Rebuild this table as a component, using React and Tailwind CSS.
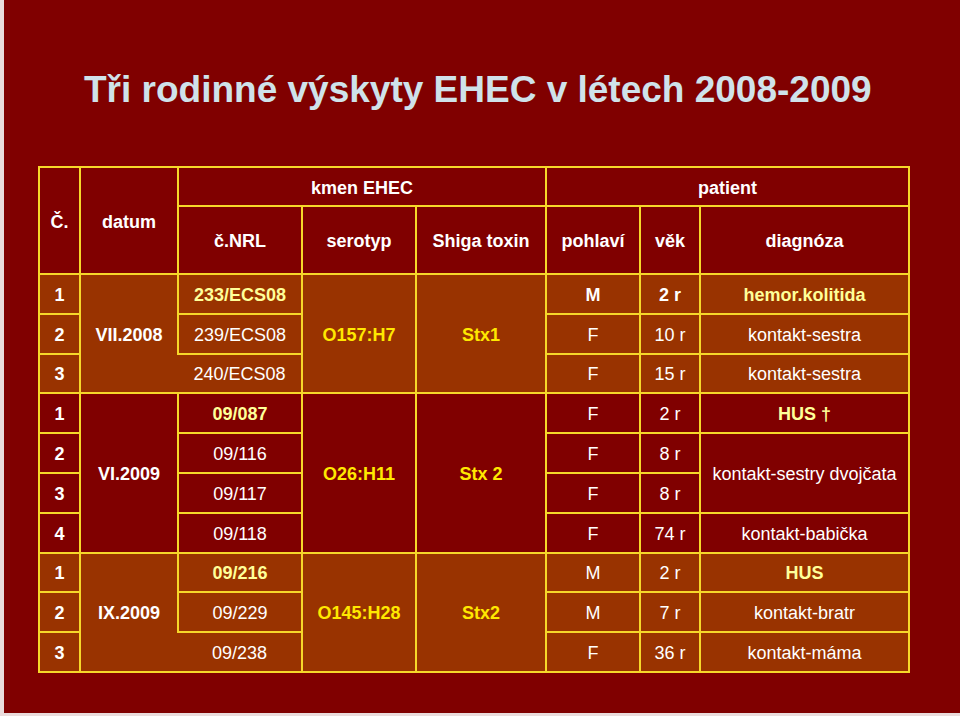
import React from "react";

const bd = "border-2 border-[#f6d72a] px-0 pt-[3px] pb-0 text-center align-middle";
const LY = "text-[#ffff99]";
const Y = "text-[#ffe800]";

function C({ children, className = "", rowSpan, colSpan }) {
  return (
    <td rowSpan={rowSpan} colSpan={colSpan} className={`${bd} ${className}`}>
      {children}
    </td>
  );
}

export default function App() {
  return (
    <div className="w-[960px] h-[716px] bg-[#eadcdc] pl-[4px] font-['Liberation_Sans',Arial,sans-serif]">
      <div className="w-[956px] h-[713px] bg-[#800000] pt-[69px] pl-[34px]">
        <h1 className="ml-[46px] text-[37px] leading-[42px] font-bold text-[#cfe2ea] whitespace-nowrap">
          Tři rodinné výskyty EHEC v létech 2008-2009
        </h1>
        <table className="mt-[55px] border-collapse table-fixed w-[870px] text-[18px] leading-[21px]">
          <colgroup>
            <col className="w-[41px]" />
            <col className="w-[98px]" />
            <col className="w-[124px]" />
            <col className="w-[114px]" />
            <col className="w-[130px]" />
            <col className="w-[94px]" />
            <col className="w-[60px]" />
            <col className="w-[209px]" />
          </colgroup>
          <tbody>
            <tr className="h-[39px] bg-[#800000] font-bold text-white">
              <C rowSpan={2}>Č.</C>
              <C rowSpan={2}>datum</C>
              <C colSpan={3}>kmen EHEC</C>
              <C colSpan={3}>patient</C>
            </tr>
            <tr className="h-[68px] bg-[#800000] font-bold text-white">
              <C>č.NRL</C>
              <C>serotyp</C>
              <C>Shiga toxin</C>
              <C>pohlaví</C>
              <C>věk</C>
              <C>diagnóza</C>
            </tr>

            {/* group 1 */}
            <tr className="h-[39.8px] bg-[#993300] text-white">
              <C className="font-bold">1</C>
              <C rowSpan={3} className="font-bold">VII.2008</C>
              <C className={`font-bold ${LY}`}>233/ECS08</C>
              <C rowSpan={3} className={`font-bold ${Y}`}>O157:H7</C>
              <C rowSpan={3} className={`font-bold ${Y}`}>Stx1</C>
              <C className="font-bold">M</C>
              <C className="font-bold">2 r</C>
              <C className={`font-bold ${LY}`}>hemor.kolitida</C>
            </tr>
            <tr className="h-[39.8px] bg-[#993300] text-white">
              <C className="font-bold">2</C>
              <C>239/ECS08</C>
              <C>F</C>
              <C>10 r</C>
              <C>kontakt-sestra</C>
            </tr>
            <tr className="h-[39.8px] bg-[#993300] text-white">
              <C className="font-bold">3</C>
              <C className="[border-left-style:hidden]">240/ECS08</C>
              <C>F</C>
              <C>15 r</C>
              <C>kontakt-sestra</C>
            </tr>

            {/* group 2 */}
            <tr className="h-[39.8px] bg-[#800000] text-white">
              <C className="font-bold">1</C>
              <C rowSpan={4} className="font-bold">VI.2009</C>
              <C className={`font-bold ${LY}`}>09/087</C>
              <C rowSpan={4} className={`font-bold ${Y}`}>O26:H11</C>
              <C rowSpan={4} className={`font-bold ${Y}`}>Stx 2</C>
              <C>F</C>
              <C>2 r</C>
              <C className={`font-bold ${LY}`}>HUS †</C>
            </tr>
            <tr className="h-[39.8px] bg-[#800000] text-white">
              <C className="font-bold">2</C>
              <C>09/116</C>
              <C>F</C>
              <C>8 r</C>
              <C rowSpan={2}>kontakt-sestry dvojčata</C>
            </tr>
            <tr className="h-[39.8px] bg-[#800000] text-white">
              <C className="font-bold">3</C>
              <C>09/117</C>
              <C>F</C>
              <C>8 r</C>
            </tr>
            <tr className="h-[39.8px] bg-[#800000] text-white">
              <C className="font-bold">4</C>
              <C>09/118</C>
              <C>F</C>
              <C>74 r</C>
              <C>kontakt-babička</C>
            </tr>

            {/* group 3 */}
            <tr className="h-[39.8px] bg-[#993300] text-white">
              <C className="font-bold">1</C>
              <C rowSpan={3} className="font-bold">IX.2009</C>
              <C className={`font-bold ${LY}`}>09/216</C>
              <C rowSpan={3} className={`font-bold ${Y}`}>O145:H28</C>
              <C rowSpan={3} className={`font-bold ${Y}`}>Stx2</C>
              <C>M</C>
              <C>2 r</C>
              <C className={`font-bold ${LY}`}>HUS</C>
            </tr>
            <tr className="h-[39.8px] bg-[#993300] text-white">
              <C className="font-bold">2</C>
              <C>09/229</C>
              <C>M</C>
              <C>7 r</C>
              <C>kontakt-bratr</C>
            </tr>
            <tr className="h-[39.8px] bg-[#993300] text-white">
              <C className="font-bold">3</C>
              <C className="[border-left-style:hidden]">09/238</C>
              <C>F</C>
              <C>36 r</C>
              <C>kontakt-máma</C>
            </tr>
          </tbody>
        </table>
      </div>
    </div>
  );
}
